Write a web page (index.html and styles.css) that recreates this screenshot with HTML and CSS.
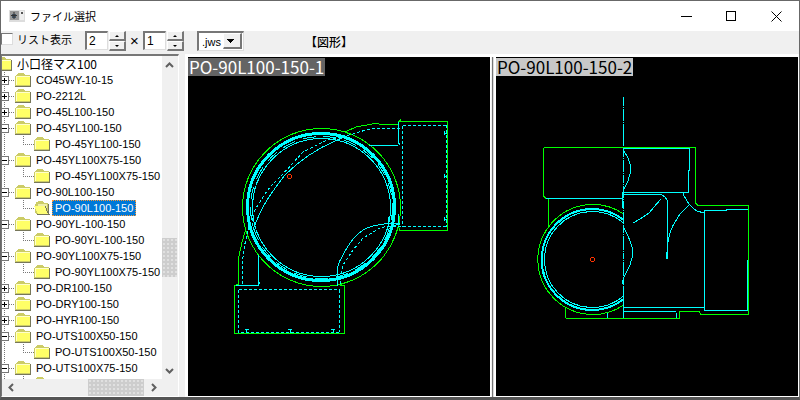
FILE: index.html
```html
<!DOCTYPE html>
<html lang="ja">
<head>
<meta charset="utf-8">
<title>ファイル選択</title>
<link rel="stylesheet" href="styles.css">
</head>
<body>
<svg class="defs" aria-hidden="true">
  <symbol id="folder" viewBox="0 0 16 14">
    <path d="M1 12V2h1V1h1V0h6v1h1v1h5v10z" fill="#cccc66"/>
    <path d="M1 3h14v10H1z" fill="#ffff66"/>
    <path d="M1 3.500h14M1.500 3v9" stroke="#ffffcc"/>
    <path d="M0 13.500h16M15.500 3v11" stroke="#77775a"/>
    <path d="M.5 3v10M1 12.500h14" stroke="#cccc66"/>
  </symbol>
  <symbol id="folder-open" viewBox="0 0 16 14">
    <path d="M1 12V3h1V1h2V0h5v1l1 1h4v11H3z" fill="#cccc66"/>
    <path d="M4 3h9v5H4z" fill="#eeeeaa"/>
    <path d="M0 5h11l4 8H4z" fill="#ffff77"/>
    <path d="M11 5l3 7M3 13.500h13M14.500 3v10" stroke="#77775a" fill="none"/>
  </symbol>
</svg>
<main class="window">
  <header class="titlebar">
    <svg class="app-icon" width="16" height="14" viewBox="0 0 16 14"><path d="M0 1h16v12H0z" fill="#ddd"/><path d="M1 2h9v9H1z" fill="#999"/><path d="M3 5h4v4H3z" fill="#456"/><path d="M5 3v7M2 6.500h6" stroke="#333"/><path d="M11 2h4v9h-4z" fill="#eee"/><path d="M12 3h2v2h-2z" fill="#555"/></svg>
    <h1>ファイル選択</h1>
    <nav class="caption">
      <button aria-label="最小化"><svg width="11" height="11"><path d="M0 5.500h11"/></svg></button>
      <button aria-label="最大化"><svg width="11" height="11"><path d="M.5.5h9v9h-9z"/></svg></button>
      <button aria-label="閉じる"><svg class="smooth" width="11" height="11"><path d="M.5.5l10 10M10.500.5l-10 10"/></svg></button>
    </nav>
  </header>
  <form class="toolbar">
    <label class="check"><input type="checkbox"><span>リスト表示</span></label>
    <div class="stepper"><input type="text" value="2" aria-label="列数"><span class="spin"><button type="button" aria-label="列を増やす"><i class="up"></i></button><button type="button" aria-label="列を減らす"><i class="down"></i></button></span></div>
    <span class="times">×</span>
    <div class="stepper"><input type="text" value="1" aria-label="行数"><span class="spin"><button type="button" aria-label="行を増やす"><i class="up"></i></button><button type="button" aria-label="行を減らす"><i class="down"></i></button></span></div>
    <div class="combo"><select aria-label="拡張子"><option>.jws</option></select></div>
    <span class="mode">【図形】</span>
  </form>
  <div class="work">
    <aside class="tree-panel">
      <div class="tree">
        <div class="row root"><svg class="folder"><use href="#folder"/></svg><span>小口径マス100</span></div>
        <ul>
          <li><div class="row"><button class="toggle plus" aria-label="開く"></button><svg class="folder"><use href="#folder"/></svg><span>CO45WY-10-15</span></div></li>
          <li><div class="row"><button class="toggle plus" aria-label="開く"></button><svg class="folder"><use href="#folder"/></svg><span>PO-2212L</span></div></li>
          <li><div class="row"><button class="toggle plus" aria-label="開く"></button><svg class="folder"><use href="#folder"/></svg><span>PO-45L100-150</span></div></li>
          <li><div class="row"><button class="toggle" aria-label="閉じる"></button><svg class="folder"><use href="#folder"/></svg><span>PO-45YL100-150</span></div>
            <ul><li><div class="row"><svg class="folder"><use href="#folder"/></svg><span>PO-45YL100-150</span></div></li></ul></li>
          <li><div class="row"><button class="toggle" aria-label="閉じる"></button><svg class="folder"><use href="#folder"/></svg><span>PO-45YL100X75-150</span></div>
            <ul><li><div class="row"><svg class="folder"><use href="#folder"/></svg><span>PO-45YL100X75-150</span></div></li></ul></li>
          <li><div class="row"><button class="toggle" aria-label="閉じる"></button><svg class="folder"><use href="#folder"/></svg><span>PO-90L100-150</span></div>
            <ul><li><div class="row"><svg class="folder"><use href="#folder-open"/></svg><span class="selected">PO-90L100-150</span></div></li></ul></li>
          <li><div class="row"><button class="toggle" aria-label="閉じる"></button><svg class="folder"><use href="#folder"/></svg><span>PO-90YL-100-150</span></div>
            <ul><li><div class="row"><svg class="folder"><use href="#folder"/></svg><span>PO-90YL-100-150</span></div></li></ul></li>
          <li><div class="row"><button class="toggle" aria-label="閉じる"></button><svg class="folder"><use href="#folder"/></svg><span>PO-90YL100X75-150</span></div>
            <ul><li><div class="row"><svg class="folder"><use href="#folder"/></svg><span>PO-90YL100X75-150</span></div></li></ul></li>
          <li><div class="row"><button class="toggle plus" aria-label="開く"></button><svg class="folder"><use href="#folder"/></svg><span>PO-DR100-150</span></div></li>
          <li><div class="row"><button class="toggle plus" aria-label="開く"></button><svg class="folder"><use href="#folder"/></svg><span>PO-DRY100-150</span></div></li>
          <li><div class="row"><button class="toggle plus" aria-label="開く"></button><svg class="folder"><use href="#folder"/></svg><span>PO-HYR100-150</span></div></li>
          <li><div class="row"><button class="toggle" aria-label="閉じる"></button><svg class="folder"><use href="#folder"/></svg><span>PO-UTS100X50-150</span></div>
            <ul><li><div class="row"><svg class="folder"><use href="#folder"/></svg><span>PO-UTS100X50-150</span></div></li></ul></li>
          <li><div class="row"><button class="toggle" aria-label="閉じる"></button><svg class="folder"><use href="#folder"/></svg><span>PO-UTS100X75-150</span></div>
            <ul><li><div class="row"><svg class="folder"><use href="#folder"/></svg></div></li></ul></li>
        </ul>
      </div>
      <div class="vscroll">
        <svg width="9" height="6"><path d="M1 5l3.500-3.500L8 5"/></svg>
        <div class="track"><div class="thumb"></div></div>
        <svg width="9" height="6"><path d="M1 1l3.500 3.500L8 1"/></svg>
      </div>
      <div class="hscroll">
        <svg width="6" height="9"><path d="M5 1L1.500 4.500L5 8"/></svg>
        <div class="track"><div class="thumb"></div></div>
        <svg width="6" height="9"><path d="M1 1l3.500 3.500L1 8"/></svg>
      </div>
    </aside>
    <section class="views">
      <figure class="view">
        <figcaption class="active">PO-90L100-150-1</figcaption>
        <svg viewBox="188 57 302 339" preserveAspectRatio="xMinYMin meet">
          <g class="outline">
            <circle cx="321.500" cy="207.500" r="79"/>
            <path d="M345 132L356 127L367 125L377 123L379 124H398"/>
            <path d="M398.500 124V122L400.500 120V121.500H447.500V230.500H400L398.500 227V214"/>
            <path d="M246 229L242 242L239 256L238.500 265V284L234.500 285.500V333.500H344.500V285.500H341L342 284"/>
          </g>
          <g class="detail">
            <circle cx="321" cy="207" r="73.500" stroke-width="3"/>
            <circle cx="321.500" cy="207.500" r="71" stroke-dasharray="13 8"/>
            <circle cx="321.500" cy="207.500" r="69"/>
            <path d="M398.500 122V143L400 145M398 145.500H369M398.500 214V225"/>
            <path d="M253 230Q256 221 263 207Q270 194 285 175Q307 153 337 140L347 136"/>
            <path d="M337 273Q337 265 342 257Q351 238 363 230Q372 225 388 223.500H400M388.500 217V225M387 227L400 224"/>
            <path d="M236 285.500H258.500M258.500 255V285L260 282M337.500 273V286"/>
            <path d="M444 131v4M444 133h3M444 174v4M444 176h3M444 217v4M444 219h3M245 329.500h4M246.500 329v4M288 329.500h4M290 329v4M331 329.500h4M333 329v4"/>
          </g>
          <g class="detail hidden-line">
            <path d="M402.500 125.500H447M402.500 125.500V226.500M446.500 125V226.500M388 226.500H447"/>
            <path d="M252 226L253 213L263 197Q270 186 282 175L303 152L327 140L353 134Q367 129 377 128.500H402"/>
            <path d="M340.500 284V275L343 265L353 250L363 238L380 228L388 226"/>
            <path d="M238.500 289.500H340M238.500 290V332.500H340M339.500 290V332"/>
            <path d="M242.500 284V265Q243 250 247 235L250 223"/>
          </g>
          <circle class="origin" cx="289.500" cy="176.500" r="2"/>
        </svg>
      </figure>
      <figure class="view">
        <figcaption>PO-90L100-150-2</figcaption>
        <svg viewBox="496 57 302 339" preserveAspectRatio="xMinYMin meet">
          <g class="outline">
            <path d="M543.500 147.500H695.500V203L698 205.500H748.500V314.500H701L699 311.500H679.500V318.500H566.500L565.500 317V307M543.500 147.500V196L546 198.500M548.500 199V227"/>
            <path d="M623 213.500A55 55 0 1 0 623 305.500"/>
          </g>
          <g class="detail">
            <path stroke-width="2" d="M623 219.500A50.500 50.500 0 1 0 623 299.500"/>
            <path d="M623 222.500A48 48 0 1 0 623 296.500"/>
            <path stroke-dasharray="9 1 1 1 12 1 1 1 22 300" d="M623.500 97V148"/>
            <path stroke-dasharray="8 1 1 1 12 1 1 1" d="M623.500 149V226"/>
            <path stroke-dasharray="6 1 1 1 14 1 1 1" d="M623.500 227V290"/>
            <path d="M623.500 287V318M622.500 192V208M546 198.500H623"/>
            <path d="M623 148.500H689.500V170H688.500V192.500H623M623 149L628 158L631 167L630 174L628 181L623 191"/>
            <path d="M624 194.500H661L665 197L667.500 201V259M666.500 252V259"/>
            <path d="M661 199L654 207L649 213L640 219L633 223M668 242Q670 230 675 222L680 214L690 204"/>
            <path d="M683.500 193V195L686 199Q690 207 697 211L704 213"/>
            <path d="M747.500 260V310.500H704.500V210.500H726V209.500H748"/>
            <path d="M623 226L628 236Q632 245 632.500 250V256L630 265L625 275L622 282L624 285"/>
            <path d="M623 307.500H704M623 311.500H676M676.500 313V318M607.500 313V318"/>
          </g>
          <circle class="origin" cx="592.500" cy="259.500" r="2"/>
        </svg>
      </figure>
    </section>
  </div>
</main>
</body>
</html>
```
FILE: styles.css
```css
* { box-sizing: border-box; }
body {
  margin: 0;
  background: #686868;
  color: #000;
  font-family: "Liberation Sans", "Noto Sans CJK JP", sans-serif;
  font-size: 11px;
}
button { padding: 0; border: 0; font: inherit; }
.defs { display: none; }
.window {
  height: 100vh;
  display: flex;
  flex-direction: column;
  background: #f0f0f0;
  border: 1px solid #686868;
  border-bottom: 3px solid #555;
}
.titlebar {
  display: flex;
  align-items: center;
  height: 30px;
  padding-left: 8px;
  background: #fff;
}
h1 {
  flex: 1;
  margin: 0 0 0 5px;
  font: 11px/16px "Noto Sans CJK JP", sans-serif;
}
.caption { display: flex; }
.caption button {
  display: grid;
  place-items: center;
  width: 45px;
  height: 28px;
  background: none;
}
.caption svg {
  fill: none;
  stroke: #000;
  shape-rendering: crispEdges;
}
.caption .smooth { shape-rendering: auto; }
.toolbar {
  display: flex;
  align-items: flex-start;
  height: 23px;
  line-height: 16px;
}
.check {
  display: flex;
  align-items: center;
  gap: 4px;
  width: 84px;
  font-family: "Noto Sans CJK JP", sans-serif;
}
.check input {
  appearance: none;
  width: 12px;
  height: 12px;
  margin: 0;
  border: 1px solid #777;
  border-right-color: #ddd;
  border-bottom-color: #ddd;
  background: #fff;
}
.stepper { display: flex; gap: 1px; }
.stepper input {
  width: 23px;
  height: 19px;
  padding: 0 2px;
  border: 2px solid #777;
  border-right: 1px solid #ddd;
  border-bottom: 1px solid #ddd;
  background: #fff;
  font: 12px "Liberation Sans", sans-serif;
}
.spin { display: flex; flex-direction: column; }
.spin button {
  display: grid;
  place-items: center;
  width: 17px;
  height: 10px;
  border: 1px solid #fff;
  border-right: 2px solid #777;
  border-bottom: 2px solid #777;
  background: #f0f0f0;
}
.spin i { border: 2px solid transparent; }
.spin .up { border-top: 0; border-bottom-color: #000; }
.spin .down { border-bottom: 0; border-top-color: #000; }
.times {
  width: 17px;
  text-align: center;
  font: 15px/20px "Liberation Sans", sans-serif;
}
.combo {
  position: relative;
  width: 47px;
  margin-left: 13px;
}
.combo select {
  display: block;
  appearance: none;
  width: 100%;
  height: 20px;
  padding: 0 3px;
  border: 2px solid #777;
  border-right: 1px solid #ddd;
  border-bottom: 1px solid #ddd;
  border-radius: 0;
  background: #fff;
  font: 11px "Liberation Sans", sans-serif;
}
.combo::after {
  content: "";
  position: absolute;
  inset: 2px 2px 2px auto;
  width: 16px;
  border: 1px solid #fff;
  border-right: 2px solid #777;
  border-bottom: 2px solid #777;
  background: linear-gradient(#000, #000) 3px 5px / 7px 1px no-repeat,
    linear-gradient(#000, #000) 4px 6px / 5px 1px no-repeat,
    linear-gradient(#000, #000) 5px 7px / 3px 1px no-repeat,
    linear-gradient(#000, #000) 6px 8px / 1px 1px no-repeat, #f0f0f0;
  pointer-events: none;
}
.mode {
  margin-left: 61px;
  font: 500 12px/21px "Noto Sans CJK JP", sans-serif;
}
.work {
  flex: 1;
  min-height: 0;
  display: grid;
  grid-template: minmax(0, 1fr) / 178px minmax(0, 1fr);
  gap: 6px;
}
.tree-panel {
  display: grid;
  grid-template: minmax(0, 1fr) 17px / minmax(0, 1fr) 16px;
  min-height: 0;
  border-top: 2px solid #777;
  border-left: 1px solid #777;
  border-right: 1px solid #fff;
  border-bottom: 1px solid #fff;
}
.tree {
  overflow: hidden;
  background: #fff;
  white-space: nowrap;
}
.tree ul { margin: 0; padding: 0; list-style: none; }
.row {
  display: flex;
  align-items: center;
  height: 16px;
  line-height: 16px;
}
.folder { flex: none; width: 16px; height: 14px; shape-rendering: crispEdges; }
.row span { padding: 0 3px; margin-left: 2px; }
.root .folder { margin-left: -6px; }
.root span { font-family: "Noto Sans CJK JP", sans-serif; font-size: 12px; }
.tree > ul { background: repeating-linear-gradient(#777 0 1px, #fff 1px 2px) 2px 0 / 1px 100% no-repeat; }
.tree > ul > li > .row::before,
li li .row::before {
  content: "";
  order: 1;
  flex: none;
  width: 6px;
  height: 1px;
  background: repeating-linear-gradient(90deg, #777 0 1px, #fff 1px 2px);
}
.row .folder { order: 2; }
.row span { order: 3; }
li li .row { padding-left: 21px; }
li li .row::before {
  width: 11px;
  height: 9px;
  align-self: flex-start;
  background: repeating-linear-gradient(#777 0 1px, transparent 1px 2px) 0 0 / 1px 8px no-repeat,
    repeating-linear-gradient(90deg, #777 0 1px, transparent 1px 2px) 0 8px / 100% 1px no-repeat;
}
.toggle {
  flex: none;
  width: 9px;
  height: 9px;
  margin-left: -2px;
  border: 1px solid #777;
  background: linear-gradient(#000, #000) center / 5px 1px no-repeat, #fff;
}
.toggle.plus {
  background: linear-gradient(#000, #000) center / 5px 1px no-repeat,
    linear-gradient(#000, #000) center / 1px 5px no-repeat, #fff;
}
.row .selected {
  background: #0078d7;
  color: #fff;
  outline: 1px dotted #ff9933;
  outline-offset: -1px;
}
.vscroll, .hscroll {
  display: flex;
  align-items: center;
  background: #f0f0f0;
}
.vscroll { flex-direction: column; padding: 6px 1px 5px 0; }
.hscroll { padding: 0 5px 0 6px; }
.vscroll svg, .hscroll svg { flex: none; fill: none; stroke: #606060; stroke-width: 2; }
.track { flex: 1; display: flex; }
.vscroll .track { flex-direction: column; width: 100%; }
.hscroll .track { height: 100%; }
.track::before { content: ""; flex: 168; }
.track::after { content: ""; flex: 90; }
.thumb {
  flex: 39;
  background: radial-gradient(circle, #e0e0e0 1px, transparent 1px) 0 0 / 4px 4px, #cdcdcd;
}
.hscroll .track::before { flex: 74; }
.hscroll .thumb { flex: 56; }
.hscroll .track::after { flex: 7; }
.views {
  display: grid;
  grid-template: minmax(0, 1fr) / repeat(2, minmax(0, 1fr));
  gap: 5px;
  border-left: 3px solid #fff;
  border-top: 3px solid #fff;
}
.view {
  position: relative;
  min-height: 0;
  margin: 0;
  background: #000;
  border-right: 1px solid #fff;
  border-bottom: 1px solid #fff;
}
.view + .view { box-shadow: -2px 0 #fff, -3px 0 #ddd, -4px 0 #777; }
.view svg {
  display: block;
  width: 100%;
  height: 100%;
  fill: none;
  shape-rendering: crispEdges;
}
figcaption {
  position: absolute;
  top: 1px;
  left: 0;
  padding: 0 1px;
  background: #c8c8c8;
  font: 17px/18px "Noto Sans CJK JP", sans-serif;
}
figcaption.active { background: #646464; color: #fff; }
.outline { stroke: #0f0; }
.detail { stroke: #0ff; }
.hidden-line { stroke-dasharray: 3 2; }
.origin { stroke: #f30; }
```
